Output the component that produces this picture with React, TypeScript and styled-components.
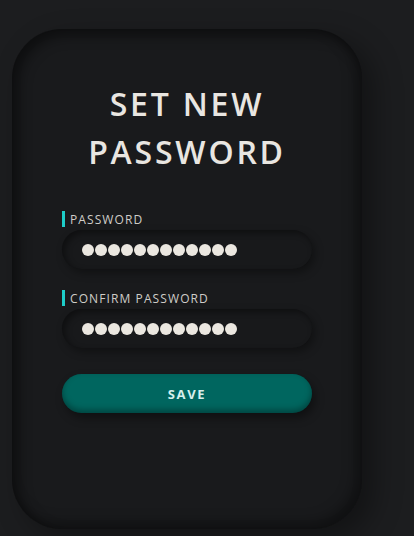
import styled, { createGlobalStyle } from "styled-components";

const GlobalStyle = createGlobalStyle`
  html, body {
    margin: 0;
    padding: 0;
    background: #1c1d1f;
    font-family: "Open Sans", "Liberation Sans", sans-serif;
  }
`;

const Page = styled.div`
  width: 414px;
  height: 536px;
  padding: 29px 0 0 12px;
  box-sizing: border-box;
  overflow: hidden;
`;

const Card = styled.div`
  width: 350px;
  height: 500px;
  box-sizing: border-box;
  border-radius: 50px;
  background: #191a1c;
  box-shadow:
    inset 6px 6px 14px rgba(0, 0, 0, 0.45),
    inset -6px -6px 14px rgba(0, 0, 0, 0.35),
    12px 10px 28px rgba(0, 0, 0, 0.35);
  padding: 51px 50px 0 50px;
  display: flex;
  flex-direction: column;
`;

const Title = styled.h1`
  margin: 0 0 35px 0;
  text-align: center;
  font-size: 32px;
  line-height: 48px;
  font-weight: 600;
  letter-spacing: 2.8px;
  color: #e9e6e1;
`;

const Field = styled.div`
  display: flex;
  flex-direction: column;
  gap: 3px;
  margin-bottom: 21px;
`;

const Label = styled.label`
  display: flex;
  align-items: center;
  height: 16px;
  font-size: 12px;
  letter-spacing: 1.1px;
  color: #cfcdc8;
  border-left: 3px solid #1ecdc8;
  padding-left: 5px;
`;

const Input = styled.div`
  height: 39px;
  border-radius: 20px;
  background: #18191b;
  box-shadow:
    inset 3px 3px 6px rgba(0, 0, 0, 0.4),
    3px 4px 8px rgba(0, 0, 0, 0.35);
  display: flex;
  align-items: center;
  padding-left: 20px;
  gap: 1px;
`;

const Dot = styled.span`
  width: 12px;
  height: 12px;
  border-radius: 50%;
  background: #ebe7e0;
`;

const SaveButton = styled.button`
  margin-top: 5px;
  height: 39px;
  width: 250px;
  border: none;
  border-radius: 20px;
  background: #00665f;
  box-shadow:
    inset 0 -3px 6px rgba(0, 0, 0, 0.35),
    3px 5px 10px rgba(0, 0, 0, 0.4);
  color: #d6efec;
  font-family: "Open Sans", "Liberation Sans", sans-serif;
  font-weight: 700;
  font-size: 13px;
  letter-spacing: 1.6px;
  cursor: pointer;
`;

function PasswordField({ label }: { label: string }) {
  return (
    <Field>
      <Label>{label}</Label>
      <Input>
        {Array.from({ length: 12 }).map((_, i) => (
          <Dot key={i} />
        ))}
      </Input>
    </Field>
  );
}

export default function App() {
  return (
    <>
      <GlobalStyle />
      <Page>
        <Card>
          <Title>
            SET NEW
            <br />
            PASSWORD
          </Title>
          <PasswordField label="PASSWORD" />
          <PasswordField label="CONFIRM PASSWORD" />
          <SaveButton>SAVE</SaveButton>
        </Card>
      </Page>
    </>
  );
}
